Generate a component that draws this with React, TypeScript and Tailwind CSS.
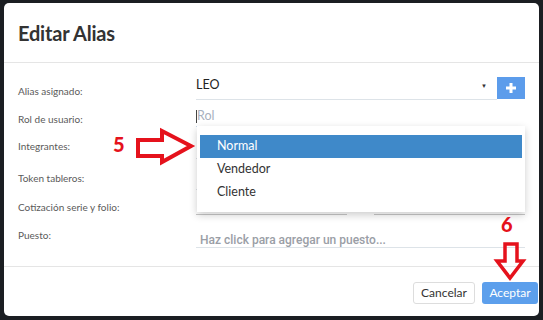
import React from "react";

const labelFont = { fontFamily: "Lato, 'Noto Sans', sans-serif" };

function FieldRow({ label, height, labelTop, children }: { label: string; height: number; labelTop: number; children?: React.ReactNode }) {
  return (
    <div className="flex" style={{ height }}>
      <div className="w-[192px] shrink-0 pl-[14px]">
        <div className="text-[10px] leading-[14px] text-[#5a5a5a]" style={{ marginTop: labelTop }}>
          {label}
        </div>
      </div>
      <div className="flex-1 pr-[14px]">{children}</div>
    </div>
  );
}

export default function App() {
  return (
    <div className="relative w-[543px] h-[320px] overflow-hidden bg-[#1b1e22] font-['Lato','Noto_Sans',sans-serif]">
      {/* Modal */}
      <div className="absolute left-[4px] top-[3px] w-[535px] h-[313px] bg-white rounded-[5px] flex flex-col">
        {/* Header */}
        <div className="h-[60px] shrink-0 flex items-center pl-[14px] border-b border-[#e5e5e5]">
          <h1 className="text-[20px] font-bold text-[#333] tracking-[-0.2px]">Editar Alias</h1>
        </div>

        {/* Body */}
        <div className="pt-[13px] flex flex-col" style={labelFont}>
          <FieldRow label="Alias asignado:" height={24} labelTop={8}>
            <div className="flex h-full">
              <div className="flex-1 flex items-start justify-between pt-[1px] border-b border-[#dde3e8] h-[24px]">
                <span className="text-[12.5px] leading-[16px] text-[#222]">LEO</span>
                <span className="text-[6px] leading-[16px] text-[#333] mr-[10px] mt-[1px]">▼</span>
              </div>
              <button className="w-[28px] h-[22px] mt-[1px] bg-[#5c9ceb] flex items-center justify-center">
                <svg width="12" height="12" viewBox="0 0 12 12">
                  <rect x="4.5" y="1" width="3" height="10" fill="#fff" />
                  <rect x="1" y="4.5" width="10" height="3" fill="#fff" />
                </svg>
              </button>
            </div>
          </FieldRow>

          <FieldRow label="Rol de usuario:" height={27} labelTop={12}>
            <div className="h-[27px] border-b border-[#c9dcef] pt-[8px] flex items-start">
              <span className="w-[1px] h-[13px] bg-[#444] mt-[2px]" />
              <span className="text-[12.5px] leading-[16px] text-[#a8b0bd]">Rol</span>
            </div>
          </FieldRow>

          <FieldRow label="Integrantes:" height={33} labelTop={12}>
            <div className="h-[32px] border-b border-[#dde3e8]" />
          </FieldRow>

          <FieldRow label="Token tableros:" height={30} labelTop={11}>
            <div className="h-[30px] border-b border-[#dde3e8]" />
          </FieldRow>

          <FieldRow label="Cotización serie y folio:" height={25} labelTop={10}>
            <div className="flex gap-[27px]">
              <div className="flex-1 h-[25px] border-b border-[#c8c8c8]" />
              <div className="flex-1 h-[25px] border-b border-[#c8c8c8]" />
            </div>
          </FieldRow>

          <FieldRow label="Puesto:" height={33} labelTop={13}>
            <div className="h-[33px] border-b border-[#dde3e8] pt-[11px] pl-[4px]">
              <span className="text-[12px] leading-[16px] text-[#9a9ea6] font-medium" style={{ fontFamily: "Roboto, 'Liberation Sans', sans-serif" }}>
                Haz click para agregar un puesto...
              </span>
            </div>
          </FieldRow>
        </div>

        {/* Footer */}
        <div className="mt-[18px] border-t border-[#e5e5e5] flex justify-end gap-[7px] pt-[15px] pr-[1px]">
          <button className="w-[62px] h-[22px] bg-white border border-[#ddd] rounded-[3px] text-[12px] text-[#333]">
            Cancelar
          </button>
          <button className="w-[56px] h-[22px] bg-[#5c9fec] rounded-[3px] text-[12px] text-white">
            Aceptar
          </button>
        </div>

        {/* Role dropdown */}
        <div className="absolute left-[193px] top-[123px] w-[328px] h-[86px] bg-white shadow-[0_3px_8px_rgba(0,0,0,0.2)] pt-[9px] px-[3px]">
          <div className="h-[23px] bg-[#3f89c9] flex items-center pl-[17px] text-[12.5px] text-white">Normal</div>
          <div className="h-[23px] flex items-center pl-[17px] text-[12.5px] text-[#333]">Vendedor</div>
          <div className="h-[23px] flex items-center pl-[17px] text-[12.5px] text-[#333]">Cliente</div>
        </div>
      </div>

      {/* Annotation 5 */}
      <span className="absolute left-[113px] top-[131px] text-[20px] leading-[26px] font-black text-[#e5121c]">5</span>
      <svg className="absolute left-0 top-0" width="543" height="320" viewBox="0 0 543 320">
        <polygon
          points="138,140 162,140 162,131 191,146 162,162 162,156 138,156"
          fill="#fff"
          stroke="#e5121c"
          strokeWidth="4"
          strokeLinejoin="miter"
        />
        <polygon
          points="505,244 517,244 517,261 523,261 510,278 497,261 505,261"
          fill="none"
          stroke="#e5121c"
          strokeWidth="3.5"
          strokeLinejoin="miter"
        />
      </svg>
      {/* Annotation 6 */}
      <span className="absolute left-[501px] top-[211px] text-[20px] leading-[26px] font-black text-[#e5121c]">6</span>
    </div>
  );
}
